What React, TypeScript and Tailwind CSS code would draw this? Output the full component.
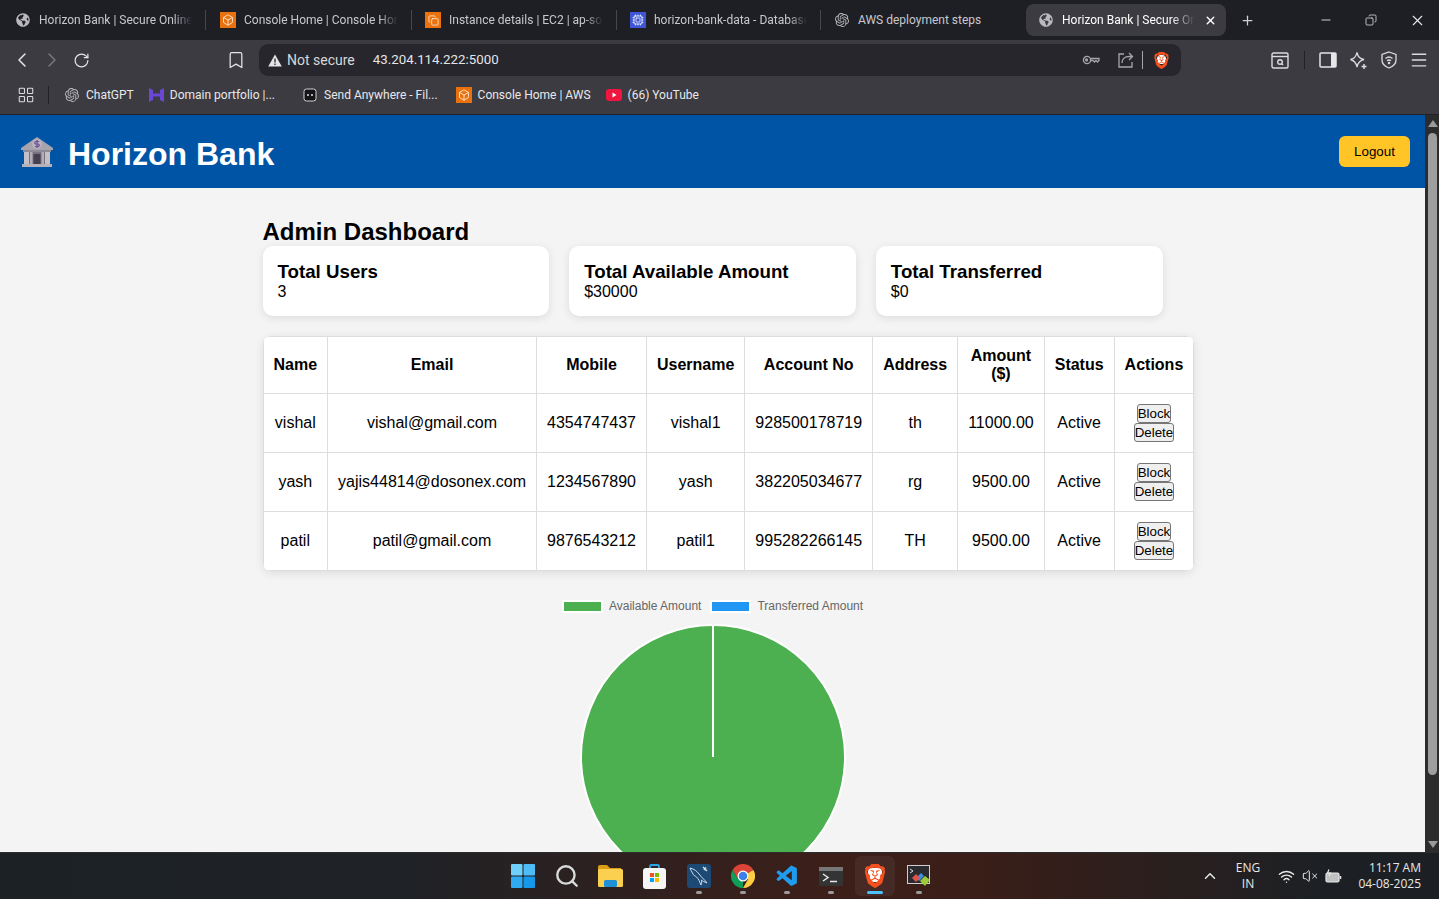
import { Bookmark, ChevronLeft, ChevronRight, ChevronUp, Box, Copy, Cpu, LayoutGrid, Menu, Minus, Plus, RotateCw, Search, VolumeX, Wifi, X } from "lucide-react";
import { FaGlobeAmericas } from "react-icons/fa";
import { SiBrave, SiOpenai } from "react-icons/si";
import { VscVscode } from "react-icons/vsc";
import type { ReactNode } from "react";

const USERS = [
  { name: "vishal", email: "vishal@gmail.com", mobile: "4354747437", username: "vishal1", account: "928500178719", address: "th", amount: "11000.00" },
  { name: "yash", email: "yajis44814@dosonex.com", mobile: "1234567890", username: "yash", account: "382205034677", address: "rg", amount: "9500.00" },
  { name: "patil", email: "patil@gmail.com", mobile: "9876543212", username: "patil1", account: "995282266145", address: "TH", amount: "9500.00" },
];

const HEADERS = ["Name", "Email", "Mobile", "Username", "Account No", "Address", "Amount ($)", "Status", "Actions"];

const STATS = [
  { title: "Total Users", value: "3" },
  { title: "Total Available Amount", value: "$30000" },
  { title: "Total Transferred", value: "$0" },
];

/* ===== favicons ===== */

function Globe() {
  return <FaGlobeAmericas size={14} className="shrink-0 text-[#b9b9bd]" />;
}

function AwsIcon() {
  return (
    <span className="flex h-4 w-4 shrink-0 items-center justify-center bg-[#e9720f]">
      <Box size={12} color="#fff" strokeWidth={1.5} />
    </span>
  );
}

function Ec2Icon() {
  return (
    <span className="flex h-4 w-4 shrink-0 items-center justify-center bg-[#e9720f]">
      <Copy size={11} color="#fff" strokeWidth={1.5} />
    </span>
  );
}

function RdsIcon() {
  return (
    <span className="flex h-4 w-4 shrink-0 items-center justify-center bg-[#3f55d6]">
      <Cpu size={12} color="#fff" strokeWidth={1.5} />
    </span>
  );
}

function GptIcon() {
  return <SiOpenai size={14} className="shrink-0 text-[#b9b9bd]" />;
}

function BraveShield({ size }: { size: number }) {
  return (
    <span className="relative flex items-center justify-center" style={{ width: size, height: size }}>
      <span className="absolute left-[22%] top-[18%] h-[56%] w-[56%] rounded-sm bg-white" />
      <SiBrave size={size} className="relative text-[#f4511e]" />
    </span>
  );
}

function BankEmoji() {
  return (
    <svg width="34" height="32" viewBox="0 0 34 32" className="shrink-0">
      <path d="M17 1 L33 12 L33 14 L1 14 L1 12 Z" fill="#a8a4ae" />
      <circle cx="17" cy="8" r="5" fill="#b7b3bd" />
      <path d="M19 5.5h-3a1 1 0 0 0 0 2.5h2a1 1 0 0 1 0 2.5h-3M17 4v8" stroke="#6f4b96" strokeWidth="1.2" fill="none" />
      <rect x="3" y="14" width="28" height="2" fill="#8f8b96" />
      <rect x="5" y="16" width="24" height="12" fill="#77737e" />
      <rect x="4" y="16" width="5" height="12" fill="#c3c0c8" />
      <rect x="25" y="16" width="5" height="12" fill="#c3c0c8" />
      <rect x="10" y="16" width="2.5" height="12" fill="#b2aeb8" />
      <rect x="21.5" y="16" width="2.5" height="12" fill="#b2aeb8" />
      <rect x="13.5" y="18" width="7" height="10" fill="#463f52" />
      <rect x="2" y="28" width="30" height="3" fill="#b5b1bb" />
    </svg>
  );
}

/* ===== browser tabs ===== */

function Tab({ icon, title, className }: { icon: ReactNode; title: string; className: string }) {
  return (
    <div className={`flex h-5 shrink-0 items-center border-r border-[#46464c] pr-[13px] ${className}`}>
      {icon}
      <span className="min-w-0 flex-1 overflow-hidden whitespace-nowrap text-[12px] text-[#c8c8cc] [mask-image:linear-gradient(90deg,#000_88%,transparent)]">
        {title}
      </span>
    </div>
  );
}

function TabBar() {
  return (
    <div className="flex h-10 shrink-0 items-center bg-[#1e1f25]">
      <Tab className="w-[206px] gap-[9px] pl-4" icon={<Globe />} title="Horizon Bank | Secure Online Banking" />
      <Tab className="w-[206px] gap-2 pl-[14px]" icon={<AwsIcon />} title="Console Home | Console Home" />
      <Tab className="w-[205px] gap-2 pl-[13px]" icon={<Ec2Icon />} title="Instance details | EC2 | ap-south-1" />
      <Tab className="w-[204px] gap-2 pl-[13px]" icon={<RdsIcon />} title="horizon-bank-data - Database" />
      <div className="flex h-5 w-[205px] shrink-0 items-center gap-[9px] pl-[14px]">
        <GptIcon />
        <span className="whitespace-nowrap text-[12px] text-[#c8c8cc]">AWS deployment steps</span>
      </div>
      <div className="flex h-8 w-[200px] shrink-0 items-center gap-[9px] rounded-lg bg-[#3b3b41] pl-[13px] pr-[9px]">
        <Globe />
        <span className="min-w-0 flex-1 overflow-hidden whitespace-nowrap text-[12px] text-white [mask-image:linear-gradient(90deg,#000_82%,transparent)]">
          Horizon Bank | Secure Online Banking
        </span>
        <X size={13} color="#fff" strokeWidth={2.5} />
      </div>
      <Plus size={15} color="#d0d0d4" className="ml-[14px]" />
      <Minus size={14} color="#e8e8ea" className="ml-[64px]" strokeWidth={1.5} />
      <Copy size={12} color="#e8e8ea" className="ml-[32px] -scale-x-100" strokeWidth={1.5} />
      <X size={17} color="#e8e8ea" className="ml-[32px]" strokeWidth={1.5} />
    </div>
  );
}

/* ===== toolbar ===== */

function Slot({ children, className = "" }: { children: ReactNode; className?: string }) {
  return <div className={`flex h-[30px] w-[30px] shrink-0 items-center justify-center ${className}`}>{children}</div>;
}

function Toolbar() {
  return (
    <div className="flex h-10 shrink-0 items-center bg-[#3b3b41] pl-[7px]">
      <Slot><ChevronLeft size={24} color="#e6e6e8" strokeWidth={1.5} /></Slot>
      <Slot><ChevronRight size={24} color="#77777c" strokeWidth={1.5} /></Slot>
      <Slot className="-translate-x-px"><RotateCw size={17} color="#e6e6e8" strokeWidth={1.7} /></Slot>
      <Slot className="ml-[124px]"><Bookmark size={20} color="#e6e6e8" strokeWidth={1.5} /></Slot>
      <div className="ml-2 flex h-8 w-[922px] shrink-0 items-center rounded-[9px] bg-[#26262c] pl-[9px] text-[14px] text-[#e4e4e6]">
        <svg width="14" height="13" viewBox="0 0 14 13" className="shrink-0">
          <path d="M7 0.500L13.800 12.500H0.200Z" fill="#e4e4e6" />
          <path d="M7 4.500V8.500M7 9.600V11" stroke="#26262c" strokeWidth="1.300" />
        </svg>
        <span className="ml-[5px] text-[#d8d8da]">Not secure</span>
        <span className="ml-[18px] text-[13.3px]">43.204.114.222:5000</span>
        <svg width="18" height="12" viewBox="0 0 18 12" fill="none" stroke="#a6a6aa" strokeWidth="1.3" className="ml-auto">
          <circle cx="5" cy="6" r="3.6" />
          <circle cx="4.500" cy="6" r="1" />
          <path d="M8.600 4.500H17V6.500L15.500 8L14 6.500L12.500 8L11 6.500H8.600" />
        </svg>
        <svg width="17" height="18" viewBox="0 0 17 18" fill="none" stroke="#a6a6aa" strokeWidth="1.3" className="ml-[17px]">
          <path d="M7 3H2V16H15V11" />
          <path d="M5 12C5 8 8 5.500 12 5.500H15.500M12 2L15.500 5.500L12 9" />
        </svg>
        <div className="ml-2 h-[18px] w-px bg-[#a6a6aa]" />
        <div className="ml-[10px] mr-[11px]"><BraveShield size={17} /></div>
      </div>
      <Slot className="ml-[84px]">
        <svg width="18" height="17" viewBox="0 0 18 17" fill="none" stroke="#dcdcde" strokeWidth="1.4">
          <rect x="1" y="1" width="16" height="15" rx="1.500" />
          <path d="M1 4.500H17" />
          <circle cx="9" cy="10" r="2.300" />
          <path d="M10.700 11.700L12 13" />
        </svg>
      </Slot>
      <div className="ml-[9px] h-[18px] w-px bg-[#222226]" />
      <Slot className="ml-[8px]">
        <svg width="18" height="16" viewBox="0 0 18 16" fill="none">
          <rect x="1" y="1" width="16" height="14" rx="1" stroke="#e6e6e8" strokeWidth="1.500" />
          <rect x="12" y="1" width="5" height="14" fill="#e6e6e8" />
        </svg>
      </Slot>
      <Slot>
        <svg width="19" height="19" viewBox="0 0 19 19" fill="none" stroke="#dcdcde" strokeWidth="1.300">
          <path d="M8 1.500C9 6 10.500 7.500 15 8.500C10.500 9.500 9 11.500 8 16C7 11.500 5.500 9.500 1.500 8.500C5.500 7.500 7 6 8 1.500Z" />
          <path d="M15 13V18M12.500 15.500H17.500" strokeWidth="1.500" />
        </svg>
      </Slot>
      <Slot className="ml-px">
        <svg width="16" height="18" viewBox="0 0 16 18" fill="none" stroke="#dcdcde" strokeWidth="1.300">
          <path d="M8 1L15 3.500V9C15 13 12 15.500 8 17C4 15.500 1 13 1 9V3.500Z" />
          <path d="M4.500 7.500C6.500 5.800 9.500 5.800 11.500 7.500M6 9.800C7.200 8.800 8.800 8.800 10 9.800" />
          <circle cx="8" cy="12" r="0.600" fill="#dcdcde" />
        </svg>
      </Slot>
      <Slot><Menu size={20} color="#dcdcde" strokeWidth={1.7} /></Slot>
    </div>
  );
}

/* ===== bookmarks ===== */

function BookmarkItem({ icon, label, className }: { icon: ReactNode; label: string; className: string }) {
  return (
    <div className={`flex shrink-0 items-center ${className}`}>
      {icon}
      <span className="whitespace-nowrap text-[12px] text-[#e8e8ea]">{label}</span>
    </div>
  );
}

function BookmarksBar() {
  return (
    <div className="flex h-[35px] shrink-0 items-center border-b border-[#222226] bg-[#3b3b41] pb-1 pl-[17px]">
      <LayoutGrid size={18} color="#dcdcde" strokeWidth={1.4} />
      <div className="ml-[13px] h-[18px] w-px bg-[#222226]" />
      <BookmarkItem className="ml-4 gap-[7px]" icon={<GptIcon />} label="ChatGPT" />
      <BookmarkItem
        className="ml-[15px] gap-[6px]"
        icon={
          <svg width="15" height="16" viewBox="0 0 15 16" className="shrink-0">
            <path d="M0 1L4 3V6.500H11V3L15 1V15L11 13V9.500H4V13L0 15Z" fill="#6a48d6" />
          </svg>
        }
        label="Domain portfolio |..."
      />
      <BookmarkItem
        className="ml-[28px] gap-[7px]"
        icon={
          <svg width="14" height="16" viewBox="0 0 14 16" className="shrink-0">
            <rect x="1" y="2" width="12" height="12" rx="2.500" fill="#151518" stroke="#d4d4d6" strokeWidth="1" />
            <circle cx="5" cy="8" r="1" fill="#e4e4e6" />
            <circle cx="9" cy="8" r="1" fill="#e4e4e6" />
          </svg>
        }
        label="Send Anywhere - Fil..."
      />
      <BookmarkItem className="ml-[18px] gap-[6px]" icon={<AwsIcon />} label="Console Home | AWS" />
      <BookmarkItem
        className="ml-[15px] gap-[6px]"
        icon={
          <svg width="16" height="12" viewBox="0 0 16 12" className="shrink-0">
            <rect width="16" height="12" rx="3" fill="#f0163f" />
            <path d="M6.500 3.500L10.500 6L6.500 8.500Z" fill="#fff" />
          </svg>
        }
        label="(66) YouTube"
      />
    </div>
  );
}

/* ===== bank page ===== */

function Dashboard() {
  return (
    <div className="min-w-0 flex-1 overflow-hidden bg-[#f4f4f4] font-['Liberation_Sans',Arial,sans-serif] text-black">
      <header className="flex h-[73px] items-center justify-between bg-[#0054a6] pl-5 pr-[15px]">
        <div className="flex items-center gap-[14px]">
          <BankEmoji />
          <h1 className="pt-1 text-[32px] font-bold leading-none text-white">Horizon Bank</h1>
        </div>
        <button className="h-[31px] w-[71px] rounded-md bg-[#ffc527] text-[13.33px] text-black">Logout</button>
      </header>

      <main className="mx-auto w-[900px] pt-[30px]">
        <h2 className="text-[24px] font-bold leading-[28px]">Admin Dashboard</h2>

        <div className="flex gap-5">
          {STATS.map((stat) => (
            <div key={stat.title} className="h-[70px] flex-1 rounded-[10px] bg-white p-[15px] shadow-[0_2px_8px_rgba(0,0,0,0.1)]">
              <h3 className="text-[18.72px] font-bold leading-[22px]">{stat.title}</h3>
              <p className="text-[16px] leading-[18px]">{stat.value}</p>
            </div>
          ))}
        </div>

        <table className="mt-5 w-full border-collapse overflow-hidden rounded-lg bg-white text-center text-[16px] shadow-[0_2px_10px_rgba(0,0,0,0.1)]">
          <thead>
            <tr>
              {HEADERS.map((h) => (
                <th key={h} className="border border-[#ddd] p-[10px] font-bold leading-[18px]">{h}</th>
              ))}
            </tr>
          </thead>
          <tbody>
            {USERS.map((u) => (
              <tr key={u.account}>
                <td className="border border-[#ddd] p-[10px]">{u.name}</td>
                <td className="border border-[#ddd] p-[10px]">{u.email}</td>
                <td className="border border-[#ddd] p-[10px]">{u.mobile}</td>
                <td className="border border-[#ddd] p-[10px]">{u.username}</td>
                <td className="border border-[#ddd] p-[10px]">{u.account}</td>
                <td className="border border-[#ddd] p-[10px]">{u.address}</td>
                <td className="border border-[#ddd] p-[10px]">{u.amount}</td>
                <td className="border border-[#ddd] p-[10px]">Active</td>
                <td className="border border-[#ddd] p-[10px] leading-[19px]">
                  <button className="rounded-[3px] border border-[#767676] bg-[#efefef] py-px align-top text-[13.33px] leading-[15px] text-black">Block</button>{" "}
                  <button className="rounded-[3px] border border-[#767676] bg-[#efefef] py-px align-top text-[13.33px] leading-[15px] text-black">Delete</button>
                </td>
              </tr>
            ))}
          </tbody>
        </table>

        <div className="flex items-center justify-center pt-[29px] text-[12px] leading-[13px] text-[#666]">
          <span className="h-[13px] w-[41px] border-2 border-white bg-[#4caf50]" />
          <span className="ml-[6px]">Available Amount</span>
          <span className="ml-[9px] h-[13px] w-[41px] border-2 border-white bg-[#2196f3]" />
          <span className="ml-[6px]">Transferred Amount</span>
        </div>

        <svg width="269" height="268" viewBox="0 0 269 268" className="mx-auto mt-[10px] block">
          <circle cx="135" cy="134" r="132" fill="#4caf50" stroke="#fff" strokeWidth="2" />
          <path d="M135 2V134" stroke="#fff" strokeWidth="2" />
        </svg>
      </main>
    </div>
  );
}

function Scrollbar() {
  return (
    <div className="flex w-[14px] shrink-0 flex-col items-center bg-[#2c2c2c] pl-px pt-[5px]">
      <div className="h-0 w-0 border-x-[5px] border-b-[7px] border-x-transparent border-b-[#9a9a9a]" />
      <div className="mt-[6px] h-[642px] w-[9px] rounded-[5px] bg-[#9e9e9e]" />
      <div className="mt-[66px] h-0 w-0 border-x-[5px] border-t-[7px] border-x-transparent border-t-[#9a9a9a]" />
    </div>
  );
}

/* ===== windows taskbar ===== */

function TaskItem({ children, open, active }: { children: ReactNode; open?: boolean; active?: boolean }) {
  return (
    <div className="relative flex h-10 w-[44px] shrink-0 items-center justify-center">
      {active && <span className="absolute inset-x-[2px] inset-y-0 rounded-md bg-white/5" />}
      <span className="relative">{children}</span>
      {open && <span className={`absolute bottom-[2px] h-[3px] rounded-full ${active ? "w-4 bg-[#4cc2ff]" : "w-[6px] bg-[#9b9b9b]"}`} />}
    </div>
  );
}

function Taskbar() {
  return (
    <div className="flex h-[47px] shrink-0 items-center border-t border-[#2d2d2d] bg-[linear-gradient(90deg,#1c2126_0%,#1f2226_28%,#3d1f19_58%,#3a1e18_68%,#1c2024_92%)] pl-[501px] font-['Open_Sans',sans-serif]">
      <TaskItem>
        <svg width="24" height="24" viewBox="0 0 24 24" className="block">
          <rect width="11.500" height="11.500" rx="1" fill="#6fd0fb" />
          <rect x="12.500" width="11.500" height="11.500" rx="1" fill="#4dbcf7" />
          <rect y="12.500" width="11.500" height="11.500" rx="1" fill="#2fa9f1" />
          <rect x="12.500" y="12.500" width="11.500" height="11.500" rx="1" fill="#1597ea" />
        </svg>
      </TaskItem>
      <TaskItem><Search size={26} color="#d9d9d9" strokeWidth={2.2} /></TaskItem>
      <TaskItem>
        <svg width="25" height="22" viewBox="0 0 25 22" className="block -translate-x-px">
          <path d="M0 2a2 2 0 0 1 2-2h7l3 3h11v4H0Z" fill="#d99e15" />
          <rect y="4" width="25" height="18" rx="1.500" fill="#fbcf4f" />
          <rect x="6" y="15" width="13" height="7" rx="1.500" fill="#1f8fd6" />
        </svg>
      </TaskItem>
      <TaskItem>
        <svg width="23" height="25" viewBox="0 0 23 25" className="block -translate-x-px">
          <path d="M7 5V2.500a1.500 1.500 0 0 1 1.500-1.500h6A1.500 1.500 0 0 1 16 2.500V5" stroke="#2aa7e8" strokeWidth="1.800" fill="none" />
          <rect y="4" width="23" height="21" rx="3" fill="#f5f5f5" />
          <rect x="7" y="9" width="4" height="4" fill="#f25022" />
          <rect x="12" y="9" width="4" height="4" fill="#7fba00" />
          <rect x="7" y="14" width="4" height="4" fill="#00a4ef" />
          <rect x="12" y="14" width="4" height="4" fill="#ffb900" />
        </svg>
      </TaskItem>
      <TaskItem open>
        <svg width="24" height="24" viewBox="0 0 24 24" className="block" fill="none" stroke="#cfdbe6" strokeWidth="1">
          <rect width="24" height="24" rx="3" fill="#1d4a75" stroke="none" />
          <path d="M3 4C7 5 10 7 12 10C14 13 17 15 20 19C17 17.500 16 17.500 14.500 16C15 19 14.500 20 14 21C12.500 18 12 15 9.500 13C7.500 11 6.500 12 5.500 9C4.500 7 3.500 6 3 4Z" />
          <path d="M16 3L20 7M19 3.500L17 6" strokeWidth="1.500" />
        </svg>
      </TaskItem>
      <TaskItem open>
        <svg width="24" height="24" viewBox="0 0 24 24" className="block">
          <path d="M12 12L22.400 6A12 12 0 0 0 1.600 6L6.800 15Z" fill="#db4437" />
          <path d="M12 12L6.800 15L1.600 6A12 12 0 0 0 12 24Z" fill="#0f9d58" />
          <path d="M12 12L22.400 6A12 12 0 0 1 12 24L17.200 15Z" fill="#ffcd40" />
          <circle cx="12" cy="12" r="5.500" fill="#fff" />
          <circle cx="12" cy="12" r="4.300" fill="#3f7fe8" />
        </svg>
      </TaskItem>
      <TaskItem open><VscVscode size={25} color="#1f9cf0" className="block" /></TaskItem>
      <TaskItem open>
        <svg width="24" height="19" viewBox="0 0 24 19" className="block">
          <rect width="24" height="19" rx="1.500" fill="#343434" />
          <rect width="24" height="4" fill="#777" />
          <path d="M4 7L9 10.500L4 14" stroke="#e8e8e8" strokeWidth="1.500" fill="none" />
          <path d="M11 14.500H18" stroke="#e8e8e8" strokeWidth="1.500" />
        </svg>
      </TaskItem>
      <TaskItem open active><BraveShield size={24} /></TaskItem>
      <TaskItem open>
        <svg width="24" height="22" viewBox="0 0 24 22" className="block">
          <rect x="0.500" y="0.500" width="22" height="18" fill="#2b2b2f" stroke="#cfcfcf" />
          <path d="M3 4L6 6L3 8" stroke="#ddd" fill="none" />
          <path d="M9 13L14 8L17 11L12 16Z" fill="#3f8fe0" />
          <path d="M5 13L9 9L13 13L9 17Z" fill="#e0534a" />
          <path d="M13 16L18 11L23 15L18 21Z" fill="#9ccc3c" />
        </svg>
      </TaskItem>

      <div className="ml-[260px] flex items-center text-[#e8e8e8]">
        <ChevronUp size={18} strokeWidth={2} />
        <div className="ml-[13px] w-[32px] text-center text-[12px] leading-[16px]">
          <div>ENG</div>
          <div>IN</div>
        </div>
        <Wifi size={17} className="ml-[14px]" />
        <VolumeX size={16} className="ml-[7px]" strokeWidth={1.500} />
        <svg width="17" height="15" viewBox="0 0 17 15" className="ml-[7px]" fill="none" stroke="#e8e8e8" strokeWidth="1.200">
          <rect x="1" y="4" width="13" height="9" rx="1.500" fill="#e8e8e8" fillOpacity="0.800" />
          <path d="M15.500 7V10" strokeWidth="1.500" />
          <path d="M4 0.500L2.500 4H5.500L4 7" />
        </svg>
        <div className="ml-2 w-[71px] text-right text-[12px] leading-[16px]">
          <div>11:17 AM</div>
          <div>04-08-2025</div>
        </div>
      </div>
    </div>
  );
}

export default function App() {
  return (
    <div className="flex h-screen w-full flex-col overflow-hidden font-['Roboto',sans-serif]">
      <TabBar />
      <Toolbar />
      <BookmarksBar />
      <div className="flex min-h-0 flex-1">
        <Dashboard />
        <Scrollbar />
      </div>
      <Taskbar />
    </div>
  );
}
